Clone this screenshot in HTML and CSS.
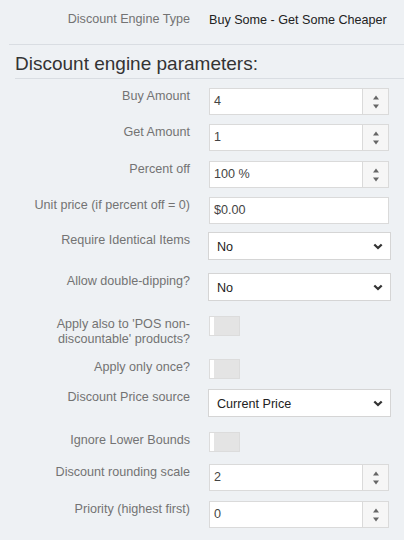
FILE: index.html
```html
<!DOCTYPE html>
<html>
<head>
<meta charset="utf-8">
<link rel="stylesheet" href="styles.css">
</head>
<body>
<div class="page">
  <div class="type-row">
    <span class="label">Discount Engine Type</span>
    <span class="value">Buy Some - Get Some Cheaper</span>
  </div>
  <div class="sep"></div>
  <h3 class="legend">Discount engine parameters:</h3>
  <div class="form">
    <div class="row h36">
      <label class="label">Buy Amount</label>
      <div class="num"><span class="num-val">4</span><span class="spin"><svg width="8" height="20" viewBox="0 0 8 20"><path d="M1 7.5 L4 3.5 L7 7.5 Z M1 12.5 L4 16.5 L7 12.5 Z" fill="#666"/></svg></span></div>
    </div>
    <div class="row h37">
      <label class="label">Get Amount</label>
      <div class="num"><span class="num-val">1</span><span class="spin"><svg width="8" height="20" viewBox="0 0 8 20"><path d="M1 7.5 L4 3.5 L7 7.5 Z M1 12.5 L4 16.5 L7 12.5 Z" fill="#666"/></svg></span></div>
    </div>
    <div class="row h36">
      <label class="label">Percent off</label>
      <div class="num"><span class="num-val">100 %</span><span class="spin"><svg width="8" height="20" viewBox="0 0 8 20"><path d="M1 7.5 L4 3.5 L7 7.5 Z M1 12.5 L4 16.5 L7 12.5 Z" fill="#666"/></svg></span></div>
    </div>
    <div class="row h35">
      <label class="label">Unit price (if percent off = 0)</label>
      <div class="text-in">$0.00</div>
    </div>
    <div class="row h41">
      <label class="label">Require Identical Items</label>
      <div class="select"><span>No</span><svg width="10" height="7" viewBox="0 0 10 7"><path d="M1.3 1.5 L5 5 L8.7 1.5" fill="none" stroke="#333" stroke-width="2.3"/></svg></div>
    </div>
    <div class="row h43">
      <label class="label">Allow double-dipping?</label>
      <div class="select"><span>No</span><svg width="10" height="7" viewBox="0 0 10 7"><path d="M1.3 1.5 L5 5 L8.7 1.5" fill="none" stroke="#333" stroke-width="2.3"/></svg></div>
    </div>
    <div class="row h43">
      <label class="label">Apply also to 'POS non-discountable' products?</label>
      <div class="toggle"><span class="knob"></span></div>
    </div>
    <div class="row h30">
      <label class="label">Apply only once?</label>
      <div class="toggle"><span class="knob"></span></div>
    </div>
    <div class="row h43">
      <label class="label">Discount Price source</label>
      <div class="select"><span>Current Price</span><svg width="10" height="7" viewBox="0 0 10 7"><path d="M1.3 1.5 L5 5 L8.7 1.5" fill="none" stroke="#333" stroke-width="2.3"/></svg></div>
    </div>
    <div class="row h32">
      <label class="label">Ignore Lower Bounds</label>
      <div class="toggle"><span class="knob"></span></div>
    </div>
    <div class="row h37">
      <label class="label">Discount rounding scale</label>
      <div class="num"><span class="num-val">2</span><span class="spin"><svg width="8" height="20" viewBox="0 0 8 20"><path d="M1 7.5 L4 3.5 L7 7.5 Z M1 12.5 L4 16.5 L7 12.5 Z" fill="#666"/></svg></span></div>
    </div>
    <div class="row h36">
      <label class="label">Priority (highest first)</label>
      <div class="num"><span class="num-val">0</span><span class="spin"><svg width="8" height="20" viewBox="0 0 8 20"><path d="M1 7.5 L4 3.5 L7 7.5 Z M1 12.5 L4 16.5 L7 12.5 Z" fill="#666"/></svg></span></div>
    </div>
  </div>
</div>
</body>
</html>
```
FILE: styles.css
```css
* { box-sizing: border-box; }
html, body {
  margin: 0;
  padding: 0;
  background: #eef1f4;
  font-family: "Liberation Sans", Arial, sans-serif;
  font-size: 12.6px;
  line-height: 16px;
}
.page {
  padding-top: 11px;
}
.type-row {
  display: grid;
  grid-template-columns: 190px auto;
  column-gap: 19px;
  height: 33px;
}
.label {
  color: #737373;
  text-align: right;
  padding-left: 20px;
}
.value {
  color: #222;
  padding-top: 1px;
  white-space: nowrap;
}
.sep {
  margin-left: 9px;
  border-top: 1px solid #d9dde2;
}
.legend {
  margin: 7px 0 0 15px;
  padding-bottom: 2px;
  font-size: 19px;
  line-height: 24px;
  font-weight: normal;
  color: #333;
  border-bottom: 1px solid #d9dde2;
}
.form {
  padding-top: 9px;
}
.row {
  display: grid;
  grid-template-columns: 190px 183px;
  column-gap: 19px;
  align-items: start;
}
.h30 { height: 30px; }
.h32 { height: 32px; }
.h35 { height: 35px; }
.h36 { height: 36px; }
.h37 { height: 37px; }
.h41 { height: 41px; }
.h43 { height: 43px; }
.row .label { line-height: 15px; padding-top: 1px; }
.num, .text-in {
  width: 180px;
  height: 27px;
  background: #fff;
  border: 1px solid #dadada;
  display: flex;
  color: #444;
}
.num-val, .text-in {
  line-height: 25px;
  padding-left: 4px;
}
.num-val { flex: 1; }
.spin {
  width: 26px;
  border-left: 1px solid #dadada;
  background: #f6f6f6;
  display: flex;
  align-items: center;
  justify-content: center;
}
.select {
  margin-left: -1px;
  width: 183px;
  height: 28px;
  background: #fff;
  border: 1px solid #d5d5d5;
  display: flex;
  align-items: center;
  justify-content: space-between;
  padding: 0 7px 0 8px;
  color: #222;
}
.select span { padding-top: 1px; }
.toggle {
  width: 31px;
  height: 20px;
  background: #e4e4e4;
  border: 1px solid #dcdcdc;
  display: flex;
}
.knob {
  width: 4px;
  height: 100%;
  background: #fff;
}
```
